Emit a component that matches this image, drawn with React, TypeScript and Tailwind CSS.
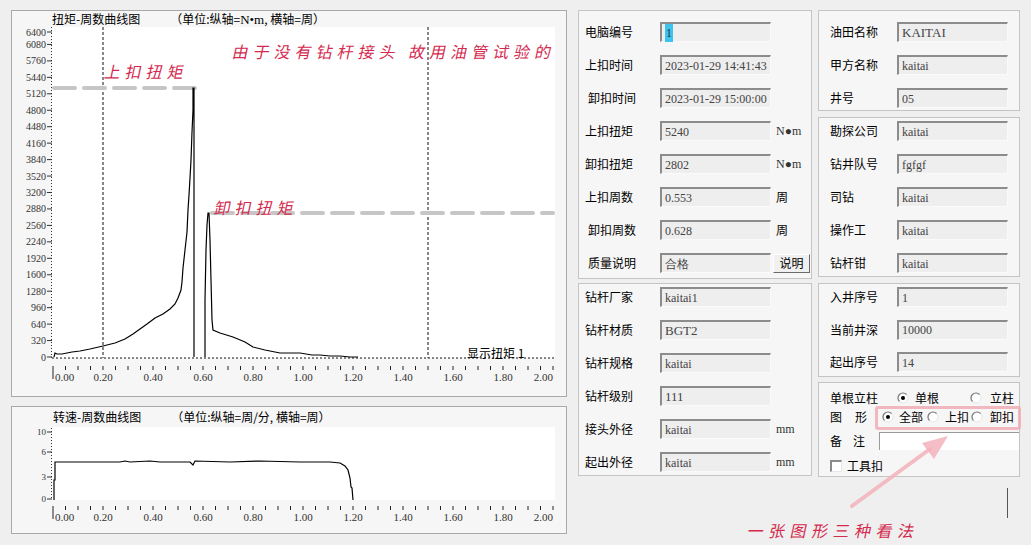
import React from 'react';

// torque curve, page coordinates (x = 53 + 250 * turns, y = 357 - torque * 16.45 / 320)
const TORQUE_MAKEUP = [
  [54, 357], [55, 353], [57, 354], [62, 354], [67, 353], [72, 352], [80, 351], [90, 349], [103, 346],
  [115, 343], [125, 339], [133, 334], [140, 329], [147, 324], [155, 318], [163, 314], [170, 309],
  [175, 304], [178, 298], [181, 290], [182, 282], [183, 268], [185, 250], [187, 232], [188, 210],
  [189, 195], [190, 178], [191, 160], [192, 132], [193, 110], [193, 88], [194, 88], [194, 357],
];
const TORQUE_BREAKOUT = [
  [205, 357], [205, 300], [206, 250], [207, 225], [208, 213], [209, 213], [210, 240], [211, 280],
  [212, 320], [213, 330], [220, 333], [233, 337], [245, 342], [253, 347], [265, 350], [280, 353],
  [300, 353], [312, 355], [320, 355], [330, 356], [340, 356], [350, 357], [358, 357],
];
const SPEED = [
  [54, 500], [54, 480], [55, 480], [55, 462], [100, 462], [120, 462], [125, 461], [130, 462],
  [150, 461], [160, 462], [190, 462], [193, 465], [195, 461], [230, 462], [260, 461], [300, 462],
  [330, 462], [340, 463], [345, 466], [348, 470], [350, 478], [351, 487], [352, 488], [353, 500],
];

const Y_TORQUE = [6400, 6080, 5760, 5440, 5120, 4800, 4480, 4160, 3840, 3520, 3200, 2880, 2560, 2240, 1920, 1600, 1280, 960, 640, 320, 0];
const Y_SPEED = [
  { v: '10', y: 432 },
  { v: '6', y: 452 },
  { v: '3', y: 477 },
  { v: '0', y: 499 },
];
const X_LABELS = ['0.00', '0.20', '0.40', '0.60', '0.80', '1.00', '1.20', '1.40', '1.60', '1.80', '2.00'];

const pts = (a: number[][]) => a.map((p) => p.join(',')).join(' ');

function XAxis({ tickY, labelY }: { tickY: number; labelY: number }) {
  const minor = Array.from({ length: 41 }, (_, i) => 53 + i * 12.5);
  return (
    <g>
      {minor.map((x, i) => (
        <line key={i} x1={x} x2={x} y1={tickY} y2={tickY + (i === 0 ? 13 : 4)} stroke="#222" strokeWidth="1" />
      ))}
      {X_LABELS.map((l, i) => {
        const last = i === X_LABELS.length - 1;
        const anchor = i === 0 ? 'start' : last ? 'end' : 'middle';
        const x = i === 0 ? 55 : last ? 553 : 53 + i * 50;
        return (
          <text key={l} x={x} y={labelY} textAnchor={anchor} fontSize="11" fill="#333">
            {l}
          </text>
        );
      })}
    </g>
  );
}

function TorqueChart() {
  return (
    <div className="flex h-[387px] flex-col border border-[#a9a9a9] bg-[#f6f6f6]">
      <div className="flex h-[16px] items-center pl-[40px] text-[12px] leading-[16px]">
        <span>扭矩-周数曲线图</span>
        <span className="ml-[30px]">
          （单位:纵轴=<span className="font-['Liberation_Serif',serif] text-[13px]">N•m</span>, 横轴=周）
        </span>
      </div>
      <svg width="554" height="369" viewBox="12 27 554 369" className="block font-['Liberation_Serif',serif]">
        <rect x="52" y="27" width="503" height="331" fill="#fff" />
        <line x1="51.5" x2="51.5" y1="27" y2="358" stroke="#333" strokeDasharray="1 2" />
        {Y_TORQUE.map((v) => {
          const y = v === 6400 ? 32 : 357 - (v * 16.45) / 320;
          return (
            <g key={v}>
              <line x1="47" x2="52" y1={y} y2={y} stroke="#333" />
              <text x="46" y={y + 3.5} textAnchor="end" fontSize="10" fill="#333">
                {v}
              </text>
            </g>
          );
        })}
        <line x1="103" x2="103" y1="27" y2="358" stroke="#111" strokeDasharray="3 2" />
        <line x1="428" x2="428" y1="27" y2="358" stroke="#111" strokeDasharray="3 2" />
        <line x1="52" x2="555" y1="358" y2="358" stroke="#111" strokeDasharray="2 2" />
        <line x1="54" x2="195" y1="88" y2="88" stroke="#c6c6c6" strokeWidth="4" strokeDasharray="21 9" strokeLinecap="round" />
        <line x1="212" x2="553" y1="213" y2="213" stroke="#c6c6c6" strokeWidth="4" strokeDasharray="21 9" strokeLinecap="round" />
        <polyline points={pts(TORQUE_MAKEUP)} fill="none" stroke="#000" strokeWidth="1.2" />
        <polyline points={pts(TORQUE_BREAKOUT)} fill="none" stroke="#000" strokeWidth="1.2" />
        <text x="467" y="358" fontSize="12" fill="#000" className="font-['Noto_Sans_CJK_SC',sans-serif]">
          显示扭矩 1
        </text>
        <XAxis tickY={366} labelY={381} />
      </svg>
    </div>
  );
}

function SpeedChart() {
  return (
    <div className="flex h-[128px] flex-col border border-[#a9a9a9] bg-[#f6f6f6]">
      <div className="flex h-[20px] items-center pl-[41px] text-[12px] leading-[20px]">
        <span>转速-周数曲线图</span>
        <span className="ml-[30px]">（单位:纵轴=周/分, 横轴=周）</span>
      </div>
      <svg width="554" height="106" viewBox="12 427 554 106" className="block font-['Liberation_Serif',serif]">
        <rect x="52" y="427" width="503" height="73" fill="#fff" />
        <line x1="51.5" x2="51.5" y1="428" y2="500" stroke="#333" strokeDasharray="1 2" />
        {Y_SPEED.map((s) => (
          <g key={s.v}>
            <line x1="47" x2="52" y1={s.y} y2={s.y} stroke="#333" />
            <text x="46" y={s.y + 3} textAnchor="end" fontSize="9" fill="#333">
              {s.v}
            </text>
          </g>
        ))}
        <polyline points={pts(SPEED)} fill="none" stroke="#000" strokeWidth="1.2" />
        <XAxis tickY={506} labelY={521} />
      </svg>
    </div>
  );
}

function Input({ value, big, selected }: { value?: string; big?: boolean; selected?: boolean }) {
  return (
    <div
      className={`flex h-[20px] w-[111px] shrink-0 items-center border-t-2 border-l-2 border-r border-b border-t-[#8c8c8c] border-l-[#8c8c8c] border-r-[#fafafa] border-b-[#fafafa] bg-[#eeeeee] pl-[3px] font-['Liberation_Serif',serif] ${
        big ? 'text-[13px]' : 'text-[12px]'
      } text-[#444]`}
    >
      {selected ? <span className="bg-[#3cc3f0] px-[1px] text-[#333]">{value}</span> : value}
    </div>
  );
}

type Row = { label: string; value: string; unit?: string; indent?: boolean; big?: boolean; selected?: boolean; cjkUnit?: boolean };

function FieldRow({ row, labelW }: { row: Row; labelW: string }) {
  return (
    <div className="flex h-[20px] items-center">
      <div className={`${labelW} shrink-0 text-[12px] ${row.indent ? 'pl-[3px]' : ''}`}>{row.label}</div>
      <Input value={row.value} big={row.big} selected={row.selected} />
      {row.unit && (
        <span className={`ml-[5px] text-[12px] ${row.cjkUnit ? '' : "font-['Liberation_Serif',serif] text-[#333]"}`}>
          {row.unit}
        </span>
      )}
    </div>
  );
}

const MID_TOP: Row[] = [
  { label: '电脑编号', value: '1', selected: true },
  { label: '上扣时间', value: '2023-01-29 14:41:43' },
  { label: '卸扣时间', value: '2023-01-29 15:00:00', indent: true },
  { label: '上扣扭矩', value: '5240', unit: 'N●m' },
  { label: '卸扣扭矩', value: '2802', unit: 'N●m' },
  { label: '上扣周数', value: '0.553', unit: '周', cjkUnit: true },
  { label: '卸扣周数', value: '0.628', unit: '周', cjkUnit: true, indent: true },
];

const MID_BOTTOM: Row[] = [
  { label: '钻杆厂家', value: 'kaitai1' },
  { label: '钻杆材质', value: 'BGT2', big: true },
  { label: '钻杆规格', value: 'kaitai' },
  { label: '钻杆级别', value: '111', big: true },
  { label: '接头外径', value: 'kaitai', unit: 'mm' },
  { label: '起出外径', value: 'kaitai', unit: 'mm' },
];

const RIGHT_A: Row[] = [
  { label: '油田名称', value: 'KAITAI', big: true },
  { label: '甲方名称', value: 'kaitai' },
  { label: '井号', value: '05' },
];
const RIGHT_B: Row[] = [
  { label: '勘探公司', value: 'kaitai' },
  { label: '钻井队号', value: 'fgfgf' },
  { label: '司钻', value: 'kaitai' },
  { label: '操作工', value: 'kaitai' },
  { label: '钻杆钳', value: 'kaitai' },
];
const RIGHT_C: Row[] = [
  { label: '入井序号', value: '1' },
  { label: '当前井深', value: '10000' },
  { label: '起出序号', value: '14' },
];

function Radio({ checked }: { checked?: boolean }) {
  return (
    <svg width="12" height="12" viewBox="0 0 12 12" className="shrink-0">
      <circle cx="6" cy="6" r="5" fill="#fff" stroke="#e6e6e6" />
      <path d="M2.46 9.54 A5 5 0 0 1 9.54 2.46" fill="none" stroke="#7a7a7a" strokeWidth="1.2" />
      {checked && <circle cx="6" cy="6" r="2" fill="#000" />}
    </svg>
  );
}

function Panel({ className, children }: { className: string; children: React.ReactNode }) {
  return <div className={`flex flex-col border border-[#c4c4c4] bg-[#f6f6f6] ${className}`}>{children}</div>;
}

export default function App() {
  return (
    <div className="relative h-[545px] w-[1031px] overflow-hidden bg-[#efefef] font-['Noto_Sans_CJK_SC',sans-serif] text-[12px] text-black">
      <div className="flex pt-[10px] pl-[11px]">
        {/* charts */}
        <div className="flex w-[556px] flex-col gap-[9px]">
          <TorqueChart />
          <SpeedChart />
        </div>

        {/* middle column */}
        <div className="ml-[11px] flex w-[234px] flex-col gap-[4px]">
          <Panel className="h-[269px] gap-[13px] pt-[11px] pl-[6px]">
            {MID_TOP.map((r) => (
              <FieldRow key={r.label} row={r} labelW="w-[75px]" />
            ))}
            <div className="flex h-[20px] items-center">
              <div className="w-[75px] shrink-0 pl-[3px] text-[12px]">质量说明</div>
              <Input value="合格" />
              <button className="ml-[2px] flex h-[19px] w-[37px] items-center justify-center border border-t-[#fff] border-l-[#fff] border-r-[#6a6a6a] border-b-[#6a6a6a] bg-[#f0f0f0] text-[12px]">
                说明
              </button>
            </div>
          </Panel>
          <Panel className="h-[193px] gap-[13px] pt-[3px] pl-[6px]">
            {MID_BOTTOM.map((r) => (
              <FieldRow key={r.label} row={r} labelW="w-[75px]" />
            ))}
          </Panel>
        </div>

        {/* right column */}
        <div className="ml-[6px] flex w-[202px] flex-col">
          <Panel className="h-[101px] gap-[13px] pt-[11px] pl-[11px]">
            {RIGHT_A.map((r) => (
              <FieldRow key={r.label} row={r} labelW="w-[67px]" />
            ))}
          </Panel>
          <Panel className="mt-[6px] h-[160px] gap-[13px] pt-[3px] pl-[11px]">
            {RIGHT_B.map((r) => (
              <FieldRow key={r.label} row={r} labelW="w-[67px]" />
            ))}
          </Panel>
          <Panel className="mt-[6px] h-[94px] gap-[12.5px] pt-[3px] pl-[11px]">
            {RIGHT_C.map((r) => (
              <FieldRow key={r.label} row={r} labelW="w-[67px]" />
            ))}
          </Panel>
          <Panel className="mt-[5px] h-[95px] pt-[6px] pl-[11px] text-[12px]">
            <div className="flex h-[18px] items-center">
              <span className="w-[67px] shrink-0">单根立柱</span>
              <div className="flex w-[73px] items-center gap-[6px]">
                <Radio checked />
                <span>单根</span>
              </div>
              <div className="flex items-center gap-[8px]">
                <Radio />
                <span>立柱</span>
              </div>
            </div>
            <div className="mt-[1px] flex h-[18px] items-center">
              <span className="w-[25px] shrink-0">图</span>
              <span className="w-[27px] shrink-0">形</span>
              <div className="flex w-[45px] items-center gap-[5px]">
                <Radio checked />
                <span>全部</span>
              </div>
              <div className="flex w-[44px] items-center gap-[6px]">
                <Radio />
                <span>上扣</span>
              </div>
              <div className="flex items-center gap-[7px]">
                <Radio />
                <span>卸扣</span>
              </div>
            </div>
            <div className="mt-[6px] flex h-[18px] items-center">
              <span className="w-[23px] shrink-0">备</span>
              <span className="w-[26px] shrink-0">注</span>
              <div className="h-[18px] flex-1 border-t border-l border-t-[#9a9a9a] border-l-[#9a9a9a] bg-white" />
            </div>
            <div className="mt-[7px] flex h-[18px] items-center gap-[5px]">
              <div className="h-[12px] w-[12px] border-t-2 border-l-2 border-r border-b border-t-[#8a8a8a] border-l-[#8a8a8a] border-r-[#e8e8e8] border-b-[#e8e8e8] bg-white" />
              <span>工具扣</span>
            </div>
          </Panel>
          <div className="mt-[11px] ml-[189px] h-[30px] w-px bg-[#555]" />
        </div>
      </div>

      {/* hand-written annotations on the screenshot */}
      <div className="pointer-events-none absolute inset-0 font-['Noto_Sans_CJK_SC',sans-serif] text-[16px] leading-[18px] text-[#d42a4e]">
        <span className="absolute top-[42px] left-[233px] -skew-x-12 tracking-[5px]">由于没有钻杆接头 故用油管试验的</span>
        <span className="absolute top-[62px] left-[105px] -skew-x-12 tracking-[5px]">上扣扭矩</span>
        <span className="absolute top-[198px] left-[215px] -skew-x-12 tracking-[5px]">卸扣扭矩</span>
        <span className="absolute top-[521px] left-[748px] -skew-x-12 tracking-[5.5px]">一张图形三种看法</span>
        <div className="absolute top-[406px] left-[875px] h-[24px] w-[146px] rounded-[3px] border-[3px] border-[#f1a9b3]/80" />
        <svg className="absolute inset-0" width="1031" height="545" viewBox="0 0 1031 545">
          <line x1="852" y1="506" x2="930" y2="449" stroke="#f3b2bb" strokeWidth="4" strokeLinecap="round" opacity="0.85" />
          <polygon points="948,436 934,459 922,443" fill="#f3b2bb" opacity="0.85" />
        </svg>
      </div>
    </div>
  );
}
